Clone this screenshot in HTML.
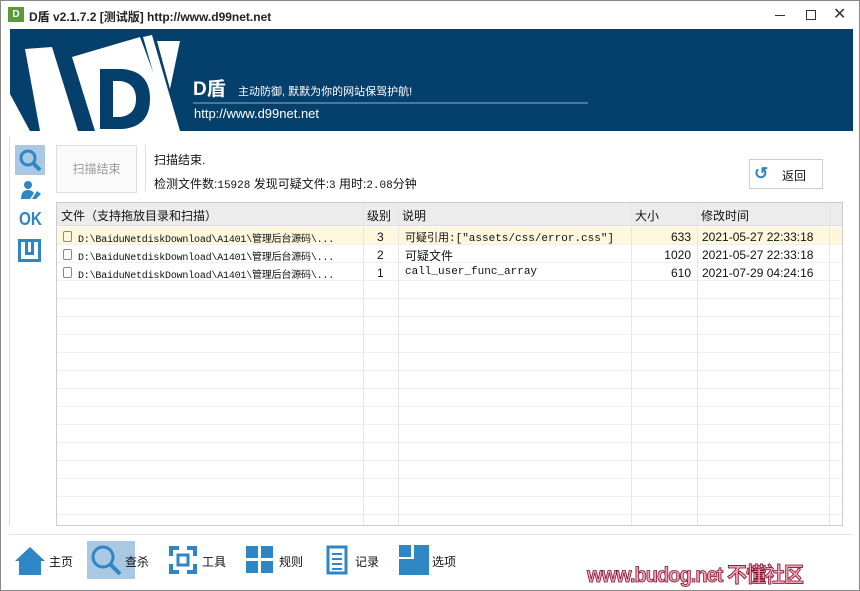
<!DOCTYPE html>
<html><head><meta charset="utf-8"><style>
*{margin:0;padding:0;box-sizing:border-box}
body{width:860px;height:591px;background:#fff;font-family:"Liberation Sans","Noto Sans CJK SC",sans-serif;font-size:12px;color:#111;position:relative;overflow:hidden;border:1px solid #888}
.abs{position:absolute}
.mono{font-family:"Liberation Mono","Noto Sans CJK SC",monospace;font-size:11px}
.hl{position:absolute;left:0;right:0;height:1px;background:#f0f0f0}
.vl{position:absolute;top:0;bottom:0;width:1px;background:#e6e6e6}
.fp{font-family:"Liberation Mono","Noto Sans CJK SC",monospace;font-size:10px;letter-spacing:-0.2px;white-space:nowrap}
</style></head><body>
<!-- title -->
<div class="abs" style="left:7px;top:6px;width:16px;height:15px;background:#5a9a3a;color:#fff;font-size:10px;font-weight:bold;text-align:center;line-height:15px">D</div>
<div class="abs" style="left:28px;top:7px;font-size:12px;font-weight:bold;color:#222">D盾 v2.1.7.2 [测试版] http://www.d99net.net</div>
<div class="abs" style="left:774px;top:14px;width:10px;height:1px;background:#333"></div>
<div class="abs" style="left:805px;top:9px;width:10px;height:10px;border:1px solid #333"></div>
<div class="abs" style="left:832px;top:3px;font-size:16px;color:#333">✕</div>
<!-- banner -->
<div class="abs" style="left:9px;top:28px;width:843px;height:102px;background:#053f6b;overflow:hidden">
<svg width="843" height="102" class="abs" style="left:0;top:0">
<polygon points="15,20 42,18 68,102 30,102" fill="#fff"/>
<polygon points="0,65 20,102 0,102" fill="#fff"/>
<polygon points="62,28 130,8 165,102 85,102" fill="#fff"/>
<polygon points="133,8 142,6 170,102 160,102" fill="#fff"/>
<polygon points="147,12 170,12 160,60" fill="#fff"/>
<path d="M90,40 L112,40 Q140,42 140,70 Q140,98 112,100 L90,100 Z M103,52 L103,88 L110,88 Q126,86 126,70 Q126,54 110,52 Z" fill="#053f6b"/>
<line x1="183" y1="74" x2="578" y2="74" stroke="#8fb0c8" stroke-width="1"/>
</svg>
<div class="abs" style="left:183px;top:45px;color:#fff;font-weight:bold;font-size:19px">D盾</div>
<div class="abs" style="left:228px;top:54px;color:#fff;font-size:11px">主动防御, 默默为你的网站保驾护航!</div>
<div class="abs" style="left:184px;top:77px;color:#fff;font-size:13px">http://www.d99net.net</div>
</div>
<!-- left sidebar -->
<div class="abs" style="left:14px;top:144px;width:30px;height:30px;background:#a9c8e3"></div>
<svg class="abs" style="left:17px;top:147px" width="24" height="24"><circle cx="10" cy="10" r="7" fill="none" stroke="#2f86c4" stroke-width="3"/><line x1="15" y1="15" x2="22" y2="22" stroke="#2f86c4" stroke-width="4"/></svg>
<svg class="abs" style="left:19px;top:179px" width="22" height="20" fill="#2f86c4"><circle cx="8" cy="5" r="4"/><path d="M1,19 Q1,10 8,10 Q12,10 14,13 L10,19Z"/><path d="M12,19 L17,11 L21,14 L16,19Z"/></svg>
<div class="abs" style="left:18px;top:208px;font-size:18px;font-weight:bold;color:#2f86c4;transform:scaleX(0.85);transform-origin:left">OK</div>
<div class="abs" style="left:17px;top:238px;width:23px;height:23px;border:3px solid #2f86c4"><div style="position:absolute;left:4px;top:0;width:9px;height:13px;border:3px solid #2f86c4;border-top:none"></div></div>
<div class="abs" style="left:8px;top:135px;width:1px;height:390px;background:#ddd"></div>
<!-- controls -->
<div class="abs" style="left:55px;top:144px;width:81px;height:48px;border:1px solid #ddd;background:#fafafa;color:#999;text-align:center;line-height:46px;font-size:12px">扫描结束</div>
<div class="abs" style="left:144px;top:144px;width:1px;height:46px;background:#ddd"></div>
<div class="abs" style="left:153px;top:150px">扫描结束.</div>
<div class="abs" style="left:153px;top:174px">检测文件数:<span class="mono">15928</span> 发现可疑文件:<span class="mono">3</span> 用时:<span class="mono">2.08</span>分钟</div>
<div class="abs" style="left:748px;top:158px;width:74px;height:30px;border:1px solid #ccc;background:#fff"><span style="position:absolute;left:4px;top:4px;color:#2f86c4;font-size:17px;font-weight:bold">↺</span><span style="position:absolute;left:32px;top:7px">返回</span></div>
<!-- table -->
<div class="abs" style="left:55px;top:201px;width:787px;height:324px;border:1px solid #ccc;overflow:hidden">
<div class="abs" style="left:0;top:0;width:787px;height:23px;background:#ececec;border-bottom:1px solid #ddd"></div>
<div class="abs" style="left:0;top:24px;width:787px;height:18px;background:#fdf8dd"></div>
<div class="hl" style="top:41px"></div><div class="hl" style="top:59px"></div><div class="hl" style="top:77px"></div><div class="hl" style="top:95px"></div><div class="hl" style="top:113px"></div><div class="hl" style="top:131px"></div><div class="hl" style="top:149px"></div><div class="hl" style="top:167px"></div><div class="hl" style="top:185px"></div><div class="hl" style="top:203px"></div><div class="hl" style="top:221px"></div><div class="hl" style="top:239px"></div><div class="hl" style="top:257px"></div><div class="hl" style="top:275px"></div><div class="hl" style="top:293px"></div><div class="hl" style="top:311px"></div>
<div class="vl" style="left:306px"></div><div class="vl" style="left:341px"></div><div class="vl" style="left:574px"></div><div class="vl" style="left:640px"></div><div class="vl" style="left:772px"></div>
<div class="abs" style="left:4px;top:4px">文件（支持拖放目录和扫描）</div>
<div class="abs" style="left:310px;top:4px">级别</div>
<div class="abs" style="left:345px;top:4px">说明</div>
<div class="abs" style="left:578px;top:4px">大小</div>
<div class="abs" style="left:644px;top:4px">修改时间</div>
<div class="abs" style="left:0;top:25px;width:787px">
<div style="height:18px;position:relative"><span class="abs" style="left:6px;top:3px;width:9px;height:11px;border:1px solid #888;border-radius:2px"></span><span class="abs fp" style="left:21px;top:2px">D:\BaiduNetdiskDownload\A1401\管理后台源码\...</span><span class="abs" style="left:320px;top:2px">3</span><span class="abs mono" style="left:348px;top:1px">可疑引用:["assets/css/error.css"]</span><span class="abs" style="left:604px;top:2px;width:30px;text-align:right">633</span><span class="abs" style="left:645px;top:2px">2021-05-27 22:33:18</span></div>
<div style="height:18px;position:relative"><span class="abs" style="left:6px;top:3px;width:9px;height:11px;border:1px solid #888;border-radius:2px"></span><span class="abs fp" style="left:21px;top:2px">D:\BaiduNetdiskDownload\A1401\管理后台源码\...</span><span class="abs" style="left:320px;top:2px">2</span><span class="abs" style="left:348px;top:1px">可疑文件</span><span class="abs" style="left:604px;top:2px;width:30px;text-align:right">1020</span><span class="abs" style="left:645px;top:2px">2021-05-27 22:33:18</span></div>
<div style="height:18px;position:relative"><span class="abs" style="left:6px;top:3px;width:9px;height:11px;border:1px solid #888;border-radius:2px"></span><span class="abs fp" style="left:21px;top:2px">D:\BaiduNetdiskDownload\A1401\管理后台源码\...</span><span class="abs" style="left:320px;top:2px">1</span><span class="abs mono" style="left:348px;top:2px">call_user_func_array</span><span class="abs" style="left:604px;top:2px;width:30px;text-align:right">610</span><span class="abs" style="left:645px;top:2px">2021-07-29 04:24:16</span></div>
</div>
</div>
<div class="abs" style="left:8px;top:533px;width:844px;height:1px;background:#e4e4e4"></div>
<!-- bottom nav -->
<svg class="abs" style="left:13px;top:544px" width="32" height="32"><polygon points="16,2 31,16 27,16 27,30 5,30 5,16 1,16" fill="#2f86c4"/></svg>
<div class="abs" style="left:48px;top:552px">主页</div>
<div class="abs" style="left:86px;top:540px;width:48px;height:38px;background:#a9c8e3"></div>
<svg class="abs" style="left:89px;top:543px" width="34" height="34"><circle cx="13" cy="13" r="10" fill="none" stroke="#2f86c4" stroke-width="3"/><line x1="20" y1="20" x2="30" y2="30" stroke="#2f86c4" stroke-width="4"/></svg>
<div class="abs" style="left:124px;top:552px">查杀</div>
<svg class="abs" style="left:168px;top:545px" width="28" height="28" fill="none" stroke="#2f86c4" stroke-width="4"><path d="M2,10V2H10M18,2H26V10M26,18V26H18M10,26H2V18"/><rect x="9" y="9" width="10" height="10" stroke-width="3"/></svg>
<div class="abs" style="left:201px;top:552px">工具</div>
<svg class="abs" style="left:245px;top:545px" width="28" height="28" fill="#2f86c4"><rect x="0" y="0" width="12" height="12"/><rect x="15" y="0" width="12" height="12"/><rect x="0" y="15" width="12" height="12"/><rect x="15" y="15" width="12" height="12"/></svg>
<div class="abs" style="left:278px;top:552px">规则</div>
<svg class="abs" style="left:325px;top:544px" width="22" height="30" fill="none" stroke="#2f86c4" stroke-width="3"><rect x="2" y="2" width="18" height="26"/><path d="M6,9H16M6,14H16M6,19H16M6,24H16" stroke-width="2"/></svg>
<div class="abs" style="left:354px;top:552px">记录</div>
<svg class="abs" style="left:398px;top:544px" width="30" height="30" fill="#2f86c4"><rect x="0" y="14" width="30" height="16"/><rect x="15" y="0" width="15" height="30"/><rect x="0" y="0" width="12" height="12"/></svg>
<div class="abs" style="left:431px;top:552px">选项</div>
<div class="abs" style="left:586px;top:558px;font-size:21px;font-weight:bold;color:#f5a0c0;-webkit-text-stroke:0.8px #7a1020;letter-spacing:-1px;transform:scaleX(0.95);transform-origin:left">www.budog.net 不懂社区</div>
</body></html>
